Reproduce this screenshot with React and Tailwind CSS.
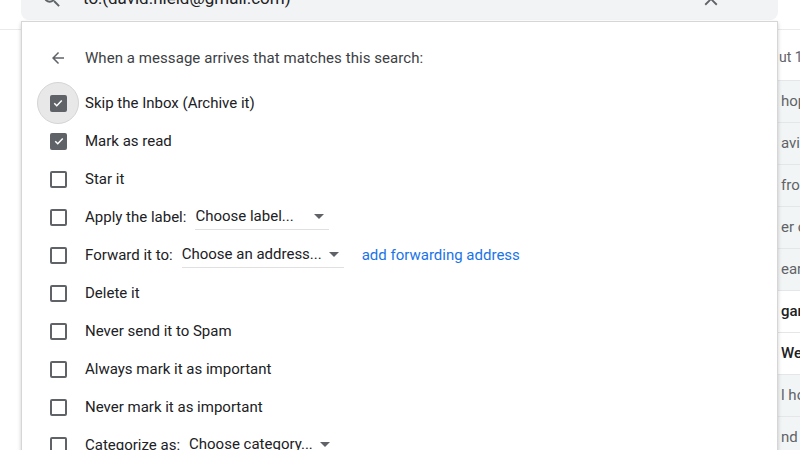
import React from 'react'

const font = { fontFamily: 'Roboto, "Liberation Sans", Arial, sans-serif' }

const rows = [
  { text: 'hop', unread: false },
  { text: 'avic', unread: false },
  { text: 'fro', unread: false },
  { text: 'er o', unread: false },
  { text: 'ear', unread: false },
  { text: 'gar', unread: true },
  { text: 'We', unread: true },
  { text: 'l ho', unread: false },
  { text: 'nd', unread: false },
]

const Checkbox = ({ checked }) =>
  checked ? (
    <div className="w-[17px] h-[17px] rounded-[2px] bg-[#5f6368] flex items-center justify-center">
      <svg width="12" height="12" viewBox="0 0 24 24" fill="none" stroke="white" strokeWidth="3">
        <path d="M4.5 12.5l5 5 10-10.5" />
      </svg>
    </div>
  ) : (
    <div className="w-[17px] h-[17px] rounded-[2px] border-2 border-[#5f6368]" />
  )

const Select = ({ label, width }) => (
  <div
    className="flex items-center justify-between border-b border-[#e0e0e0] h-[26px] pr-[5px]"
    style={{ width }}
  >
    <span>{label}</span>
    <svg width="10" height="5" viewBox="0 0 10 5">
      <path d="M0 0l5 5 5-5z" fill="#5f6368" />
    </svg>
  </div>
)

const Option = ({ checked, highlight, children }) => (
  <div className="flex items-center h-[38px]">
    <div className={`w-[63px] flex items-center ${highlight ? 'pl-[15px]' : 'pl-[28px]'}`}>
      {highlight ? (
        <div className="w-[42px] h-[42px] rounded-full bg-[#e8e8e8] border border-[#d5d5d5] flex items-center justify-center">
          <Checkbox checked={checked} />
        </div>
      ) : (
        <Checkbox checked={checked} />
      )}
    </div>
    <div className="flex items-center">{children}</div>
  </div>
)

export default function App() {
  return (
    <div className="relative w-[800px] h-[450px] overflow-hidden bg-white text-[15px] text-[#202124]" style={font}>
      {/* background: inbox behind the dropdown */}
      <div className="h-[30px] border-b border-[#e8eaed]" />
      <div className="flex justify-end">
        <div className="w-[22px] overflow-hidden">
          <div className="h-[50px] flex items-center text-[14px] text-[#5f6368] whitespace-nowrap pl-[1px] pt-[4px]">ut 1</div>
          {rows.map((r, i) => (
            <div
              key={i}
              className={`h-[42px] border-t border-[#e5e6e8] flex items-center pl-[3px] text-[15px] whitespace-nowrap ${
                r.unread ? 'bg-white text-[#202124] font-medium' : 'bg-[#f2f5f5] text-[#5f6368]'
              }`}
            >
              {r.text}
            </div>
          ))}
        </div>
      </div>

      {/* search bar + filter panel */}
      <div className="absolute left-[21px] top-[-22px] w-[757px]">
        <div className="h-[42px] bg-[#f1f3f4] rounded-b-[8px] flex items-center text-[17px] text-[#202124]">
          <div className="w-[62px] flex justify-center">
            <svg width="22" height="22" viewBox="0 0 24 24" fill="#5f6368">
              <path d="M15.5 14h-.79l-.28-.27A6.47 6.47 0 0016 9.5 6.5 6.5 0 109.5 16c1.61 0 3.09-.59 4.23-1.57l.27.28v.79l5 4.99L20.49 19l-4.99-5zm-6 0C7.01 14 5 11.99 5 9.5S7.01 5 9.5 5 14 7.01 14 9.5 11.99 14 9.5 14z" />
            </svg>
          </div>
          <span className="flex-1">to:(david.nield@gmail.com)</span>
          <div className="w-[80px] flex justify-start pl-[2px]">
            <svg width="22" height="22" viewBox="0 0 24 24" fill="#5f6368">
              <path d="M19 6.41L17.59 5 12 10.59 6.41 5 5 6.41 10.59 12 5 17.59 6.41 19 12 13.41 17.59 19 19 17.59 13.41 12z" />
            </svg>
          </div>
        </div>
        <div className="mt-[1px] h-[460px] bg-white border border-[#d6d6d6] shadow-[0_2px_4px_rgba(0,0,0,0.2)] pt-[16px]">
          <div className="flex items-center h-[40px]">
            <div className="w-[63px] pl-[27px]">
              <svg width="18" height="18" viewBox="0 0 24 24" fill="#5f6368">
                <path d="M20 11H7.83l5.59-5.59L12 4l-8 8 8 8 1.41-1.41L7.83 13H20v-2z" />
              </svg>
            </div>
            <span className="text-[#3c4043] tracking-[0.06px]">When a message arrives that matches this search:</span>
          </div>
          <div className="mt-[6px]">
            <Option checked highlight>Skip the Inbox (Archive it)</Option>
            <Option checked>Mark as read</Option>
            <Option>Star it</Option>
            <Option>
              <span className="mr-[9px]">Apply the label:</span>
              <Select label="Choose label..." width={134} />
            </Option>
            <Option>
              <span className="mr-[9px]">Forward it to:</span>
              <Select label="Choose an address..." width={162} />
              <span className="ml-[18px] text-[#1a73e8]">add forwarding address</span>
            </Option>
            <Option>Delete it</Option>
            <Option>Never send it to Spam</Option>
            <Option>Always mark it as important</Option>
            <Option>Never mark it as important</Option>
            <Option>
              <span className="mr-[9px]">Categorize as:</span>
              <Select label="Choose category..." width={146} />
            </Option>
          </div>
        </div>
      </div>
    </div>
  )
}
